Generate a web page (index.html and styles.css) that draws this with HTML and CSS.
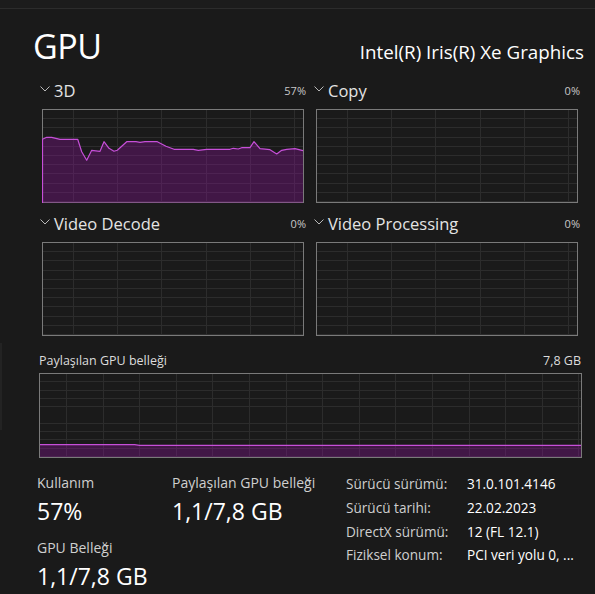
FILE: index.html
```html
<!DOCTYPE html>
<html lang="tr">
<head>
<meta charset="utf-8">
<title>GPU</title>
<link rel="stylesheet" href="styles.css">
</head>
<body>
<div class="topbar"></div>
<div class="side-tab"></div>
<main class="page">
  <header class="title-row">
    <h1 class="title">GPU</h1>
    <div class="model">Intel(R) Iris(R) Xe Graphics</div>
  </header>

  <section class="engines">
    <div class="engine">
      <div class="engine-head">
        <span class="engine-name"><svg class="chev" width="10" height="6" viewBox="0 0 10 6"><path d="M0.5 0.5 L5 5 L9.5 0.5" fill="none" stroke="#b8b8b8" stroke-width="1"/></svg>3D</span>
        <span class="engine-pct">57%</span>
      </div>
      <div class="graph">
        <svg class="plot" viewBox="42 109 262 94" preserveAspectRatio="none">
          <path class="area" d="M42.5 203 L42.5 139.3 L46.7 137.3 L51.7 137.3 L60 139.3 L77.7 139.3 L81.7 151.7 L86.7 160.3 L91.7 150.3 L100 151.3 L104 141.7 L109 148.3 L114 151.3 L117.3 150.3 L126.7 141.7 L136 141.7 L140 142.3 L145 141.7 L157.3 141.7 L166 146.3 L174 149.3 L193.3 149.3 L198.3 150.3 L206.7 149.3 L230 149.3 L233.3 148.3 L238.3 149 L241.7 147.7 L250 147.7 L254 141.7 L260 148.7 L270 149.7 L276.7 154 L281.7 150.3 L286.7 149.3 L295 148.7 L303 150.7 L303 203 Z"/>
          <path class="line" d="M42.5 203 L42.5 139.3 L46.7 137.3 L51.7 137.3 L60 139.3 L77.7 139.3 L81.7 151.7 L86.7 160.3 L91.7 150.3 L100 151.3 L104 141.7 L109 148.3 L114 151.3 L117.3 150.3 L126.7 141.7 L136 141.7 L140 142.3 L145 141.7 L157.3 141.7 L166 146.3 L174 149.3 L193.3 149.3 L198.3 150.3 L206.7 149.3 L230 149.3 L233.3 148.3 L238.3 149 L241.7 147.7 L250 147.7 L254 141.7 L260 148.7 L270 149.7 L276.7 154 L281.7 150.3 L286.7 149.3 L295 148.7 L303 150.7"/>
        </svg>
      </div>
    </div>

    <div class="engine">
      <div class="engine-head">
        <span class="engine-name"><svg class="chev" width="10" height="6" viewBox="0 0 10 6"><path d="M0.5 0.5 L5 5 L9.5 0.5" fill="none" stroke="#b8b8b8" stroke-width="1"/></svg>Copy</span>
        <span class="engine-pct">0%</span>
      </div>
      <div class="graph"></div>
    </div>

    <div class="engine">
      <div class="engine-head">
        <span class="engine-name"><svg class="chev" width="10" height="6" viewBox="0 0 10 6"><path d="M0.5 0.5 L5 5 L9.5 0.5" fill="none" stroke="#b8b8b8" stroke-width="1"/></svg>Video Decode</span>
        <span class="engine-pct">0%</span>
      </div>
      <div class="graph"></div>
    </div>

    <div class="engine">
      <div class="engine-head">
        <span class="engine-name"><svg class="chev" width="10" height="6" viewBox="0 0 10 6"><path d="M0.5 0.5 L5 5 L9.5 0.5" fill="none" stroke="#b8b8b8" stroke-width="1"/></svg>Video Processing</span>
        <span class="engine-pct">0%</span>
      </div>
      <div class="graph"></div>
    </div>
  </section>

  <section class="shared">
    <div class="shared-head">
      <span>Paylaşılan GPU belleği</span>
      <span>7,8 GB</span>
    </div>
    <div class="graph graph-wide">
      <svg class="plot" viewBox="0 0 543 84" preserveAspectRatio="none">
        <path class="area" d="M0 84 L0 71.5 L95 71.5 L100 72.3 L543 72.3 L543 84 Z"/>
        <path class="line" d="M0 71.5 L95 71.5 L100 72.3 L543 72.3"/>
      </svg>
    </div>
  </section>

  <section class="stats">
    <div class="stat-col stat-first">
      <div class="stat">
        <div class="stat-label">Kullanım</div>
        <div class="stat-value">57%</div>
      </div>
      <div class="stat">
        <div class="stat-label">GPU Belleği</div>
        <div class="stat-value">1,1/7,8 GB</div>
      </div>
    </div>
    <div class="stat-col stat-second">
      <div class="stat">
        <div class="stat-label">Paylaşılan GPU belleği</div>
        <div class="stat-value">1,1/7,8 GB</div>
      </div>
    </div>
    <dl class="props">
      <dt>Sürücü sürümü:</dt><dd>31.0.101.4146</dd>
      <dt>Sürücü tarihi:</dt><dd>22.02.2023</dd>
      <dt>DirectX sürümü:</dt><dd>12 (FL 12.1)</dd>
      <dt>Fiziksel konum:</dt><dd>PCI veri yolu 0, ...</dd>
    </dl>
  </section>
</main>
</body>
</html>
```

FILE: styles.css
```css
* { box-sizing: border-box; }

html, body {
  margin: 0;
  padding: 0;
  background: #1a1a1a;
  width: 595px;
  height: 594px;
  overflow: hidden;
}

body {
  position: relative;
  font-family: "Open Sans", "Noto Sans", "Liberation Sans", sans-serif;
  color: #ffffff;
}

.topbar {
  height: 9px;
  background: #1c1c1c;
  border-bottom: 1px solid #2c2c2c;
}

.side-tab {
  position: absolute;
  left: 0;
  top: 343px;
  width: 2px;
  height: 87px;
  background: #232323;
}

.page {
  padding: 0 11px 0 0;
}

.title-row {
  height: 61px;
  display: flex;
  justify-content: space-between;
  align-items: baseline;
  padding-left: 33px;
  padding-top: 17px;
}

.title {
  margin: 0;
  font-weight: 400;
  font-size: 34px;
  line-height: 40px;
  letter-spacing: -0.5px;
}

.model {
  font-size: 18.8px;
  line-height: 24px;
  letter-spacing: 0;
}

.engines {
  display: grid;
  grid-template-columns: 266px 266px;
  column-gap: 8px;
  padding-left: 40px;
}

.engine-head {
  height: 39px;
  display: flex;
  justify-content: space-between;
  align-items: flex-end;
  padding-bottom: 8px;
}

.engine-name {
  font-size: 16.5px;
  line-height: 20px;
  color: #e4e4e4;
  display: flex;
  align-items: center;
  letter-spacing: 0;
}

.chev {
  margin-right: 4px;
  margin-top: -5px;
}

.engine-pct {
  font-size: 11px;
  line-height: 16px;
  color: #c8c8c8;
  padding-bottom: 2px;
}

.graph {
  position: relative;
  margin-left: 2px;
  width: 262px;
  height: 94px;
  border: 1px solid #7a7a7a;
  background-color: #1a1a1a;
  background-image:
    repeating-linear-gradient(to right, #2c2c2c 0 1px, transparent 1px 44.2px),
    repeating-linear-gradient(to bottom, transparent 0 8.2px, #2c2c2c 8.2px 9.2px);
  background-position: 30px 0, 0 0;
}

.plot {
  position: absolute;
  left: -1px;
  top: -1px;
  width: 262px;
  height: 94px;
}

.area {
  fill: rgba(150, 20, 165, 0.32);
  stroke: none;
}

.line {
  fill: none;
  stroke: #c64fd8;
  stroke-width: 1.2;
  stroke-linejoin: round;
}

.shared {
  padding-left: 39px;
}

.shared-head {
  height: 37px;
  display: flex;
  justify-content: space-between;
  align-items: flex-end;
  padding-bottom: 4px;
  padding-right: 3px;
  font-size: 12.5px;
  line-height: 16px;
  color: #dcdcdc;
}

.graph-wide {
  margin-left: 0;
  width: 543px;
  height: 85px;
  background-image:
    repeating-linear-gradient(to right, #2c2c2c 0 1px, transparent 1px 36.6px),
    repeating-linear-gradient(to bottom, transparent 0 7.3px, #2c2c2c 7.3px 8.3px);
  background-position: 26px 0, 0 0;
}

.graph-wide .plot {
  left: 0;
  top: 0;
  width: 541px;
  height: 83px;
}

.stats {
  display: flex;
  align-items: flex-start;
  padding-left: 37px;
  padding-top: 16px;
}

.stat-col {
  display: flex;
  flex-direction: column;
  gap: 13px;
}

.stat-first { width: 135px; }
.stat-second { width: 174px; }

.stat-label {
  font-size: 14px;
  line-height: 18px;
  margin-bottom: 4px;
  color: #cfcfcf;
}

.stat-value {
  font-size: 23px;
  line-height: 30px;
  color: #ffffff;
}

.props {
  margin: 1px 0 0;
  display: grid;
  grid-template-columns: 121px auto;
  align-content: start;
  row-gap: 5.8px;
  font-size: 13.6px;
  line-height: 18px;
}

.props dt {
  color: #cfcfcf;
}

.props dd {
  margin: 0;
  color: #ffffff;
}
```
